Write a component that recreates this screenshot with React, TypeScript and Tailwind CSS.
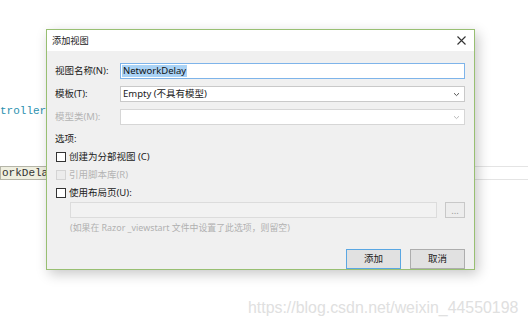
import React from 'react';

const font = { fontFamily: '"Noto Sans", "Noto Sans CJK SC", sans-serif' };

const Chevron: React.FC<{ color: string }> = ({ color }) => (
  <svg width="7" height="5" viewBox="0 0 7 5">
    <path d="M1 1.2 L3.5 3.6 L6 1.2" stroke={color} strokeWidth="1" fill="none" />
  </svg>
);

const CheckBox: React.FC<{ disabled?: boolean }> = ({ disabled }) => (
  <div
    className={`w-[10px] h-[10px] border ${disabled ? 'border-[#d4d4d4] bg-[#ececec]' : 'border-[#333] bg-white'}`}
  />
);

const App: React.FC = () => {
  return (
    <div className="relative w-[528px] h-[327px] bg-white overflow-hidden" style={font}>
      {/* editor behind the dialog */}
      <div className="absolute left-0 top-[104px] text-[11px] leading-[14px] text-[#2b91af] font-['Liberation_Mono',monospace]">
        troller
      </div>
      <div className="absolute left-0 top-[166px] w-[528px] h-[14px] border-y border-[#e4e4e4]" />
      <div className="absolute left-0 top-[166px] h-[14px] pl-[1px] pr-[2px] bg-[#efefe0] border border-[#b5b5a8] text-[11px] leading-[12px] text-[#333] font-['Liberation_Mono',monospace]">
        orkDela
      </div>
      <div className="absolute left-[248px] top-[297px] text-[15.9px] leading-[22px] text-[#e0e0e0] font-['Liberation_Sans',sans-serif]">
        https://blog.csdn.net/weixin_44550198
      </div>

      {/* dialog */}
      <div className="relative ml-[46px] mt-[29px] w-[429px] h-[241px] border border-[#98bf72] bg-[#f0f0f0] shadow-[3px_4px_12px_rgba(0,0,0,0.22)] flex flex-col text-[9.5px] text-[#1a1a1a]">
        <div className="h-[21px] bg-white flex items-center justify-between pl-[5px] pr-[8px]">
          <span className="text-[#222] text-[9.2px]">添加视图</span>
          <svg width="9" height="9" viewBox="0 0 9 9">
            <path d="M0.5 0.5 L8.5 8.5 M8.5 0.5 L0.5 8.5" stroke="#333" strokeWidth="1.1" />
          </svg>
        </div>

        <div className="flex flex-col pt-[12px] pl-[8px] pr-[9px]">
          <div className="flex items-center h-[16px]">
            <span className="w-[65px]">视图名称(N):</span>
            <div className="flex-1 h-[16px] bg-white border border-[#7eb4ea] flex items-center pl-[1px]">
              <span className="bg-[#a9d2f5] px-[1px] leading-[12px] text-[#111]">NetworkDelay</span>
            </div>
          </div>
          <div className="flex items-center h-[16px] mt-[7px]">
            <span className="w-[65px]">模板(T):</span>
            <div className="flex-1 h-[16px] bg-white border border-[#c9c9c9] flex items-center justify-between pl-[2px] pr-[4px]">
              <span>Empty (不具有模型)</span>
              <Chevron color="#555" />
            </div>
          </div>
          <div className="flex items-center h-[16px] mt-[7px]">
            <span className="w-[65px] text-[#b4b4b4]">模型类(M):</span>
            <div className="flex-1 h-[16px] bg-white border border-[#d6d6d6] flex items-center justify-end pr-[4px]">
              <Chevron color="#bbb" />
            </div>
          </div>

          <div className="h-[10px] leading-[10px] mt-[9px]">选项:</div>

          <div className="flex items-center gap-[3px] h-[12px] mt-[7px] pl-[1px]">
            <CheckBox />
            <span>创建为分部视图 (C)</span>
          </div>
          <div className="flex items-center gap-[3px] h-[12px] mt-[6px] pl-[1px]">
            <CheckBox disabled />
            <span className="text-[#b4b4b4]">引用脚本库(R)</span>
          </div>
          <div className="flex items-center gap-[3px] h-[12px] mt-[6px] pl-[1px]">
            <CheckBox />
            <span>使用布局页(U):</span>
          </div>

          <div className="flex items-center h-[16px] mt-[3px] pl-[15px]">
            <div className="flex-1 h-[16px] bg-[#f2f2f2] border border-[#dcdcdc]" />
            <div className="ml-[8px] w-[20px] h-[16px] border border-[#c8c8c8] bg-[#ededed] flex items-end justify-center pb-[3px] text-[#999] leading-[6px]">
              ...
            </div>
          </div>
          <div className="pl-[15px] mt-[4px] h-[12px] leading-[12px] text-[8.9px] text-[#b0b0b0]">
            (如果在 Razor _viewstart 文件中设置了此选项，则留空)
          </div>

          <div className="flex justify-end gap-[9px] mt-[15px]">
            <div className="w-[55px] h-[20px] bg-[#e1e1e1] border border-[#5aa7e3] flex items-center justify-center">
              添加
            </div>
            <div className="w-[55px] h-[20px] bg-[#e1e1e1] border border-[#adadad] flex items-center justify-center">
              取消
            </div>
          </div>
        </div>
      </div>
    </div>
  );
};

export default App;
